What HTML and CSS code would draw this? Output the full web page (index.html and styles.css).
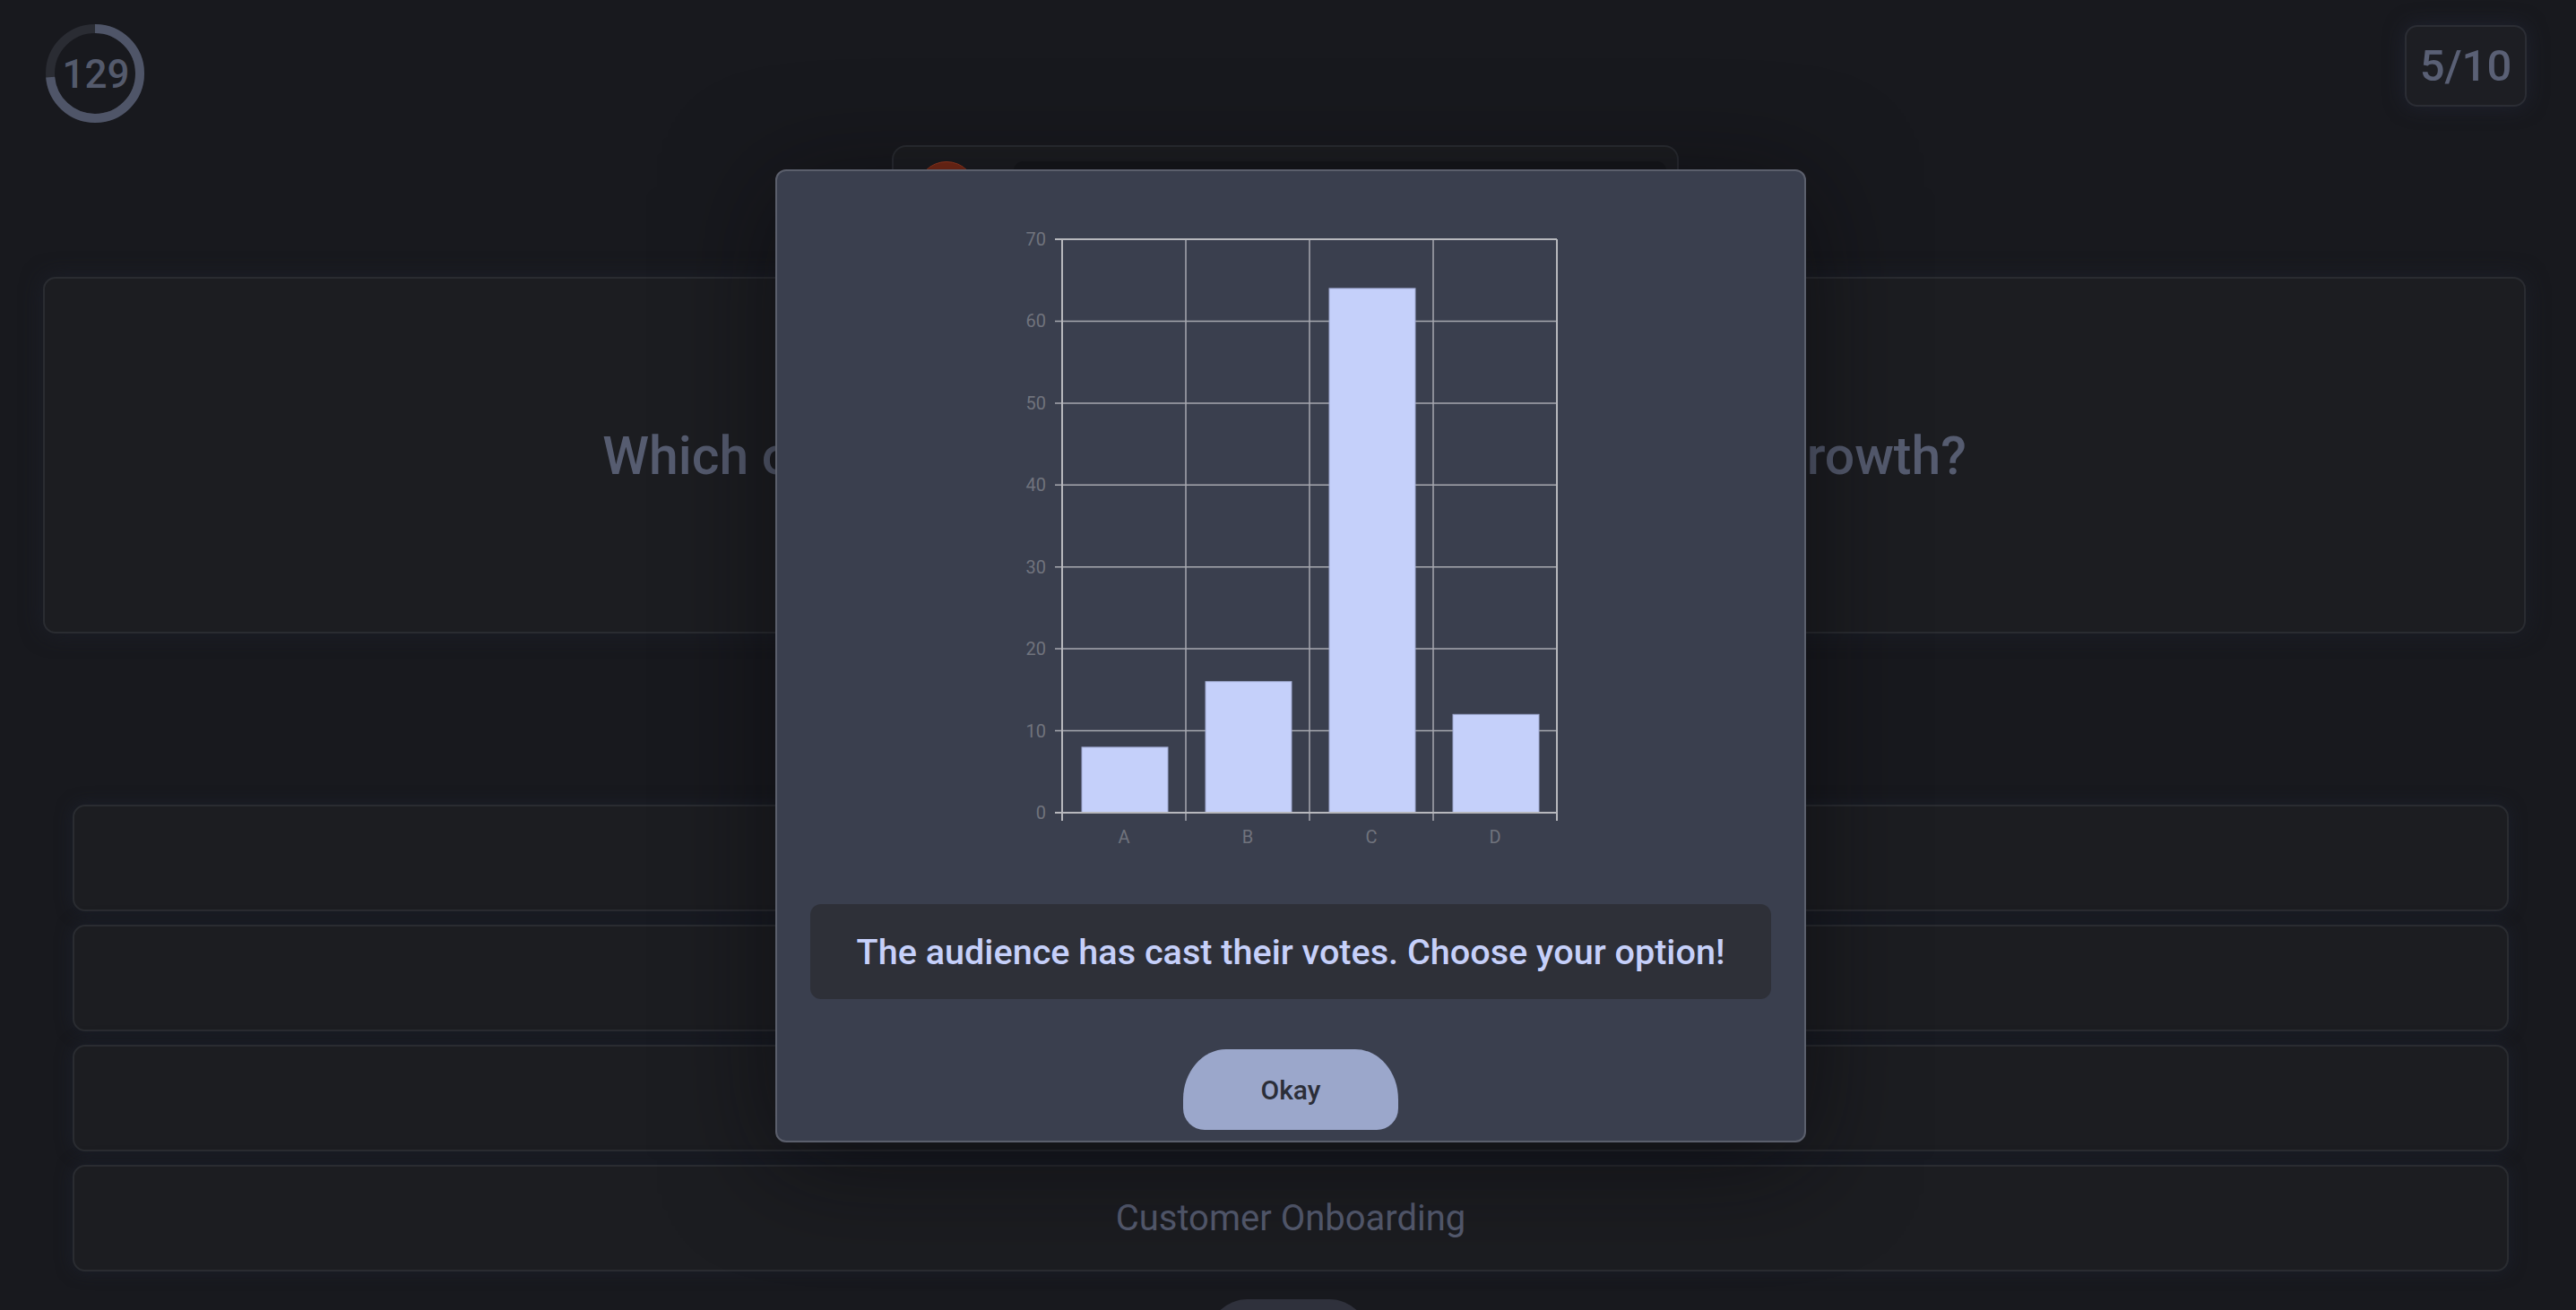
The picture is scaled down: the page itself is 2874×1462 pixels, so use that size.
FILE: index.html
```html
<!DOCTYPE html>
<html>
<head>
    <title>Quiz</title>
    <link rel="stylesheet" href="styles.css">
</head>
<body>
    <div class="page">
        <div class="topbar">
            <div class="timer">
                <svg width="110" height="110" viewBox="0 0 110 110">
                    <circle cx="55" cy="55" r="50" fill="none" stroke="#2a2c33" stroke-width="10"/>
                    <circle cx="55" cy="55" r="50" fill="none" stroke="#4f5568" stroke-width="10"
                            stroke-dasharray="231 400" transform="rotate(-90 55 55)"/>
                </svg>
                <span class="timer-value">129</span>
            </div>
            <div class="score">5/10</div>
        </div>

        <div class="player-card">
            <div class="avatar"></div>
            <div class="player-field"></div>
        </div>

        <div class="question-card">
            <h2 class="question">Which of these business areas is most critical for growth?</h2>
        </div>

        <div class="options">
            <div class="option"></div>
            <div class="option"></div>
            <div class="option"></div>
            <div class="option">Customer Onboarding</div>
        </div>

        <div class="footer">
            <button class="lifeline"></button>
        </div>
    </div>

    <div class="modal">
        <svg class="chart" width="640" height="720" viewBox="0 0 640 720">
            <g stroke="#a7a9b0" stroke-width="1.5">
                <line x1="57" y1="575.6" x2="617" y2="575.6"/>
                <line x1="57" y1="484.1" x2="617" y2="484.1"/>
                <line x1="57" y1="392.7" x2="617" y2="392.7"/>
                <line x1="57" y1="301.3" x2="617" y2="301.3"/>
                <line x1="57" y1="209.9" x2="617" y2="209.9"/>
                <line x1="57" y1="118.4" x2="617" y2="118.4"/>
                <line x1="203" y1="27" x2="203" y2="676"/>
                <line x1="341" y1="27" x2="341" y2="676"/>
                <line x1="479" y1="27" x2="479" y2="676"/>
            </g>
            <g fill="#c5d0fa" stroke="#9ea8cf" stroke-width="1">
                <rect x="87" y="593.9" width="96" height="73.1"/>
                <rect x="225" y="520.7" width="96" height="146.3"/>
                <rect x="363" y="81.9" width="96" height="585.1"/>
                <rect x="501" y="557.3" width="96" height="109.7"/>
            </g>
            <g stroke="#b7b8bd" stroke-width="2">
                <line x1="57" y1="27" x2="617" y2="27"/>
                <line x1="57" y1="667" x2="617" y2="667"/>
                <line x1="65" y1="27" x2="65" y2="676"/>
                <line x1="617" y1="27" x2="617" y2="676"/>
            </g>
            <g class="axis-label" text-anchor="end">
                <text x="47" y="674">0</text>
                <text x="47" y="582.6">10</text>
                <text x="47" y="491.1">20</text>
                <text x="47" y="399.7">30</text>
                <text x="47" y="308.3">40</text>
                <text x="47" y="216.9">50</text>
                <text x="47" y="125.4">60</text>
                <text x="47" y="34">70</text>
            </g>
            <g class="axis-label" text-anchor="middle">
                <text x="134" y="701">A</text>
                <text x="272" y="701">B</text>
                <text x="410" y="701">C</text>
                <text x="548" y="701">D</text>
            </g>
        </svg>
        <div class="message">The audience has cast their votes. Choose your option!</div>
        <button class="okay">Okay</button>
    </div>
</body>
</html>
```

FILE: styles.css
```css
body {
    margin: 0;
    background-color: #18191e;
    font-family: Roboto, "Liberation Sans", sans-serif;
}

.page {
    height: 1462px;
    overflow: hidden;
}

.topbar {
    display: flex;
    justify-content: space-between;
    align-items: flex-start;
    padding: 27px 55px 0 51px;
}

.timer {
    position: relative;
    width: 110px;
    height: 110px;
}

.timer svg {
    display: block;
}

.timer-value {
    position: absolute;
    inset: 0;
    display: flex;
    align-items: center;
    justify-content: center;
    padding: 2px 0 0 2px;
    font-size: 44px;
    font-weight: 500;
    color: #545a6c;
}

.score {
    box-sizing: border-box;
    width: 136px;
    height: 91px;
    margin-top: 1px;
    display: flex;
    align-items: center;
    justify-content: center;
    border: 2px solid #2b2d34;
    border-radius: 14px;
    background-color: #1d1e23;
    box-shadow: 0 0 22px rgba(36, 42, 60, 0.6);
    font-size: 49px;
    font-weight: 500;
    color: #5a6075;
}

.player-card {
    box-sizing: border-box;
    width: 878px;
    height: 120px;
    margin: 25px 0 0 995px;
    display: flex;
    align-items: flex-start;
    padding: 16px 12px 0 26px;
    border: 2px solid #2a2c32;
    border-radius: 16px;
    background-color: #1c1d21;
}

.avatar {
    width: 64px;
    height: 64px;
    border-radius: 50%;
    background-color: #7a2a16;
    border: 1px solid #9c3a1f;
}

.player-field {
    flex: 1;
    height: 56px;
    margin-left: 42px;
    border-radius: 10px;
    background-color: #16171b;
}

.question-card {
    box-sizing: border-box;
    height: 398px;
    margin: 27px 56px 0 48px;
    display: flex;
    align-items: center;
    justify-content: center;
    border: 2px solid #2a2c31;
    border-radius: 14px;
    background-color: #1c1d21;
    box-shadow: 0 0 24px rgba(30, 34, 46, 0.7);
}

.question {
    margin: 0;
    font-size: 58.9px;
    font-weight: 500;
    color: #565c70;
}

.options {
    display: flex;
    flex-direction: column;
    gap: 15px;
    margin: 191px 75px 0 81px;
}

.option {
    box-sizing: border-box;
    height: 119px;
    display: flex;
    align-items: center;
    justify-content: center;
    border: 2px solid #2a2c31;
    border-radius: 14px;
    background-color: #1c1d21;
    box-shadow: 0 0 18px rgba(28, 34, 48, 0.7);
    font-size: 40px;
    color: #565c70;
}

.footer {
    display: flex;
    justify-content: center;
    margin-top: 31px;
}

.lifeline {
    width: 181px;
    height: 90px;
    border: none;
    border-radius: 45px;
    background-color: #2f313c;
}

.modal {
    position: absolute;
    left: 865px;
    top: 189px;
    box-sizing: border-box;
    width: 1150px;
    height: 1086px;
    display: flex;
    flex-direction: column;
    align-items: center;
    padding: 49px 37px 12px;
    border: 2px solid #5b5f6c;
    border-radius: 12px;
    background-color: #3a3f4e;
    box-shadow: 0 20px 120px rgba(8, 9, 12, 0.6);
}

.chart {
    display: block;
    flex-shrink: 0;
}

.axis-label {
    font-family: Roboto, sans-serif;
    font-size: 20px;
    fill: #70737d;
}

.message {
    box-sizing: border-box;
    width: 100%;
    height: 106px;
    margin-top: 49px;
    display: flex;
    align-items: center;
    justify-content: center;
    border-radius: 12px;
    background-color: #2e3038;
    font-size: 39.6px;
    font-weight: 500;
    color: #c6d0fa;
}

.okay {
    width: 240px;
    height: 90px;
    margin-top: 56px;
    border: none;
    border-radius: 48px 48px 24px 24px / 56px 56px 24px 24px;
    background-color: #9ba7cb;
    color: #2b2e38;
    font-family: Roboto, sans-serif;
    font-size: 30px;
    font-weight: 500;
}
```
